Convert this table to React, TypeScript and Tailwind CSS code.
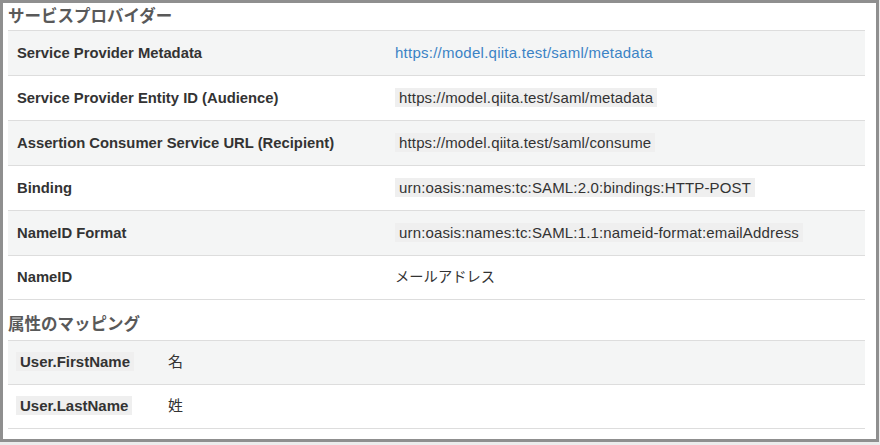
const font = { fontFamily: '"Liberation Sans", "Noto Sans CJK JP", sans-serif' };

type Row = { label: string; value: string; kind: "link" | "code" | "text" };

const spRows: Row[] = [
  { label: "Service Provider Metadata", value: "https://model.qiita.test/saml/metadata", kind: "link" },
  { label: "Service Provider Entity ID (Audience)", value: "https://model.qiita.test/saml/metadata", kind: "code" },
  { label: "Assertion Consumer Service URL (Recipient)", value: "https://model.qiita.test/saml/consume", kind: "code" },
  { label: "Binding", value: "urn:oasis:names:tc:SAML:2.0:bindings:HTTP-POST", kind: "code" },
  { label: "NameID Format", value: "urn:oasis:names:tc:SAML:1.1:nameid-format:emailAddress", kind: "code" },
  { label: "NameID", value: "メールアドレス", kind: "text" },
];

const mapRows = [
  { attr: "User.FirstName", value: "名" },
  { attr: "User.LastName", value: "姓" },
];

const Code = ({ children }: { children: React.ReactNode }) => (
  <code className="bg-[#efefef] px-[4px] py-[1px] leading-[17px] tracking-[0.15px]" style={font}>
    {children}
  </code>
);

export default function App() {
  return (
    <div className="w-[880px] h-[445px] bg-[#ececec] text-[15px] text-[#333]" style={font}>
      <div className="w-[879px] h-[442px] bg-white border-[3px] border-[#8f8f8f] pl-[5px] pr-[11px]">
        <h2 className="h-[27px] pt-[2px] text-[16.5px] font-bold text-[#595959] leading-[22px]">サービスプロバイダー</h2>
        <div className="border-b border-[#dddddd]">
          {spRows.map((r, i) => (
            <div
              key={r.label}
              className={`grid grid-cols-[379px_1fr] items-center ${i === 5 ? "h-[44px]" : "h-[45px]"} border-t border-[#dddddd] ${i % 2 === 0 ? "bg-[#f4f5f5]" : "bg-white"}`}
            >
              <div className="pl-[9px] font-bold text-[14.8px]">{r.label}</div>
              <div className="pl-[8px]">
                {r.kind === "link" && <a className="text-[#3b83c5] tracking-[0.25px]">{r.value}</a>}
                {r.kind === "code" && <Code>{r.value}</Code>}
                {r.kind === "text" && <span className="text-[14.3px]">{r.value}</span>}
              </div>
            </div>
          ))}
        </div>
        <h2 className="h-[40px] pt-[13px] text-[16.5px] font-bold text-[#595959] leading-[22px]">属性のマッピング</h2>
        <div className="border-b border-[#dddddd]">
          {mapRows.map((r, i) => (
            <div
              key={r.attr}
              className={`grid grid-cols-[152px_1fr] items-center h-[44px] border-t border-[#dddddd] ${i % 2 === 0 ? "bg-[#f4f5f5]" : "bg-white"}`}
            >
              <div className="pl-[8px]">
                <code className="bg-[#efefef] px-[4px] py-[1px] font-bold leading-[17px]" style={font}>
                  {r.attr}
                </code>
              </div>
              <div className="pl-[8px]">{r.value}</div>
            </div>
          ))}
        </div>
      </div>
    </div>
  );
}
